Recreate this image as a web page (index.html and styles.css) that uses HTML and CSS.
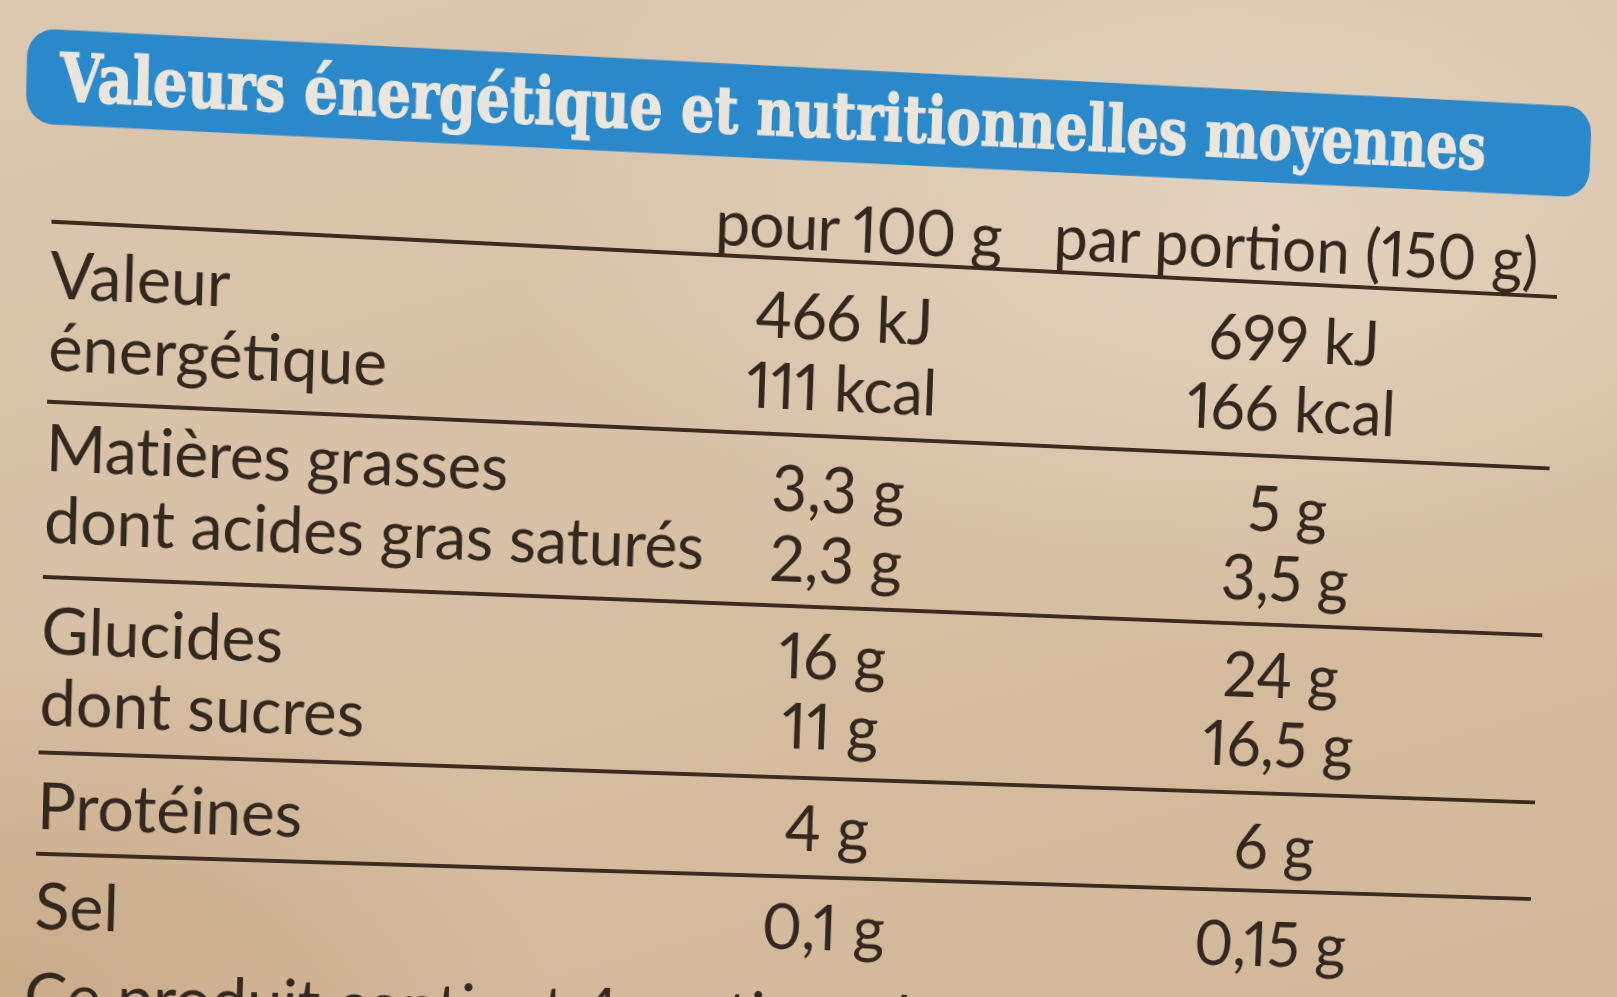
FILE: index.html
```html
<!DOCTYPE html>
<html lang="fr">
<head>
<meta charset="utf-8">
<title>Valeurs nutritionnelles</title>
<link rel="stylesheet" href="styles.css">
</head>
<body>
<div class="sheet">
  <div class="banner"><span class="banner-title">Valeurs énergétique et nutritionnelles moyennes</span></div>
  <div class="table">
    <div class="row row-head">
      <div class="cell label"></div>
      <div class="cell val v1">pour 100 g</div>
      <div class="cell val v2">par portion (150 g)</div>
    </div>
    <div class="row row-energy">
      <div class="cell label">Valeur<br>énergétique</div>
      <div class="cell val v1">466 kJ<br>111 kcal</div>
      <div class="cell val v2">699 kJ<br>166 kcal</div>
    </div>
    <div class="row row-fat">
      <div class="cell label">Matières grasses<br>dont acides gras saturés</div>
      <div class="cell val v1">3,3 g<br>2,3 g</div>
      <div class="cell val v2">5 g<br>3,5 g</div>
    </div>
    <div class="row row-carb">
      <div class="cell label">Glucides<br>dont sucres</div>
      <div class="cell val v1">16 g<br>11 g</div>
      <div class="cell val v2">24 g<br>16,5 g</div>
    </div>
    <div class="row row-prot">
      <div class="cell label">Protéines</div>
      <div class="cell val v1">4 g</div>
      <div class="cell val v2">6 g</div>
    </div>
    <div class="row row-salt">
      <div class="cell label">Sel</div>
      <div class="cell val v1">0,1 g</div>
      <div class="cell val v2">0,15 g</div>
    </div>
  </div>
  <p class="note">Ce produit contient 4 portions de 150 g.</p>
</div>
</body>
</html>
```

FILE: styles.css
```css
html, body {
  margin: 0;
  height: 100%;
  overflow: hidden;
}

body {
  background:
    radial-gradient(ellipse 45% 50% at 0% 100%, rgba(186, 150, 112, 0.45), rgba(186, 150, 112, 0) 75%),
    radial-gradient(ellipse 65% 60% at 78% 22%, rgba(232, 217, 199, 0.7), rgba(232, 217, 199, 0) 72%),
    linear-gradient(165deg, #dbc7af 0%, #d8c1a6 40%, #d4bb9c 75%, #d2b898 100%);
  font-family: Lato, "Open Sans", sans-serif;
  font-variant-numeric: proportional-nums;
  color: #33281f;
}

.sheet {
  width: 1700px;
  box-sizing: border-box;
  padding: 20px 0 0 40px;
  transform-origin: 0 0;
  transform: matrix3d(0.992012, 0.056382, 0, 0.0000308737, -0.024169, 1.014549, 0, 0.0000125162, 0, 0, 1, 0, 17.094, 7.2461, 0, 1);
  filter: blur(0.6px);
}

.banner {
  width: 1660px;
  height: 94px;
  margin-left: -28.7px;
  box-sizing: border-box;
  padding-left: 34px;
  background: #2a89ca;
  border-radius: 28px;
  transform: rotate(-0.31deg);
  transform-origin: 0 0;
  white-space: nowrap;
  font-family: "DejaVu Serif", serif;
  font-size: 66px;
  line-height: 94px;
}

.banner-title {
  display: inline-block;
  font-weight: bold;
  color: #ebe6dd;
  -webkit-text-stroke: 1.6px #ebe6dd;
  transform: scaleX(0.835);
  transform-origin: 0 50%;
}

.table {
  width: 1601px;
  margin-top: 22px;
}

.row {
  display: grid;
  grid-template-columns: 686px 280px 627px;
  box-sizing: border-box;
  border-top: 4px solid #3b2b20;
}

.cell {
  font-size: 66px;
  line-height: 72px;
  white-space: nowrap;
}

.val {
  text-align: center;
}

.v2 {
  padding-left: 67px;
}

.row-head {
  border-top: 0;
  height: 72px;
}

.row-head .v1 {
  padding-top: 3px;
  padding-right: 32px;
  letter-spacing: -1px;
}

.row-energy { height: 179px; }
.row-fat { height: 175px; }
.row-carb { height: 176px; }
.row-prot { height: 102px; }

.row-energy .label { padding-top: 12.5px; }
.row-energy .val { padding-top: 18px; }
.row-energy .v1 { letter-spacing: -0.5px; }

.row-fat .label { padding-top: 5.5px; letter-spacing: -0.3px; }
.row-fat .val { padding-top: 14.5px; }

.row-carb .label { padding-top: 13.5px; }
.row-carb .v1 { padding-top: 10.5px; }
.row-carb .v2 { padding-top: 12.5px; }

.row-prot .label { padding-top: 13.5px; }
.row-prot .v1 { padding-top: 12px; }
.row-prot .v2 { padding-top: 15.5px; }

.row-salt .label { padding-top: 12.5px; }
.row-salt .v1 { padding-top: 12px; }
.row-salt .v2 { padding-top: 16px; }

.note {
  margin: 16px 0 0 -8.5px;
  font-size: 66px;
  line-height: 72px;
  white-space: nowrap;
}
```
